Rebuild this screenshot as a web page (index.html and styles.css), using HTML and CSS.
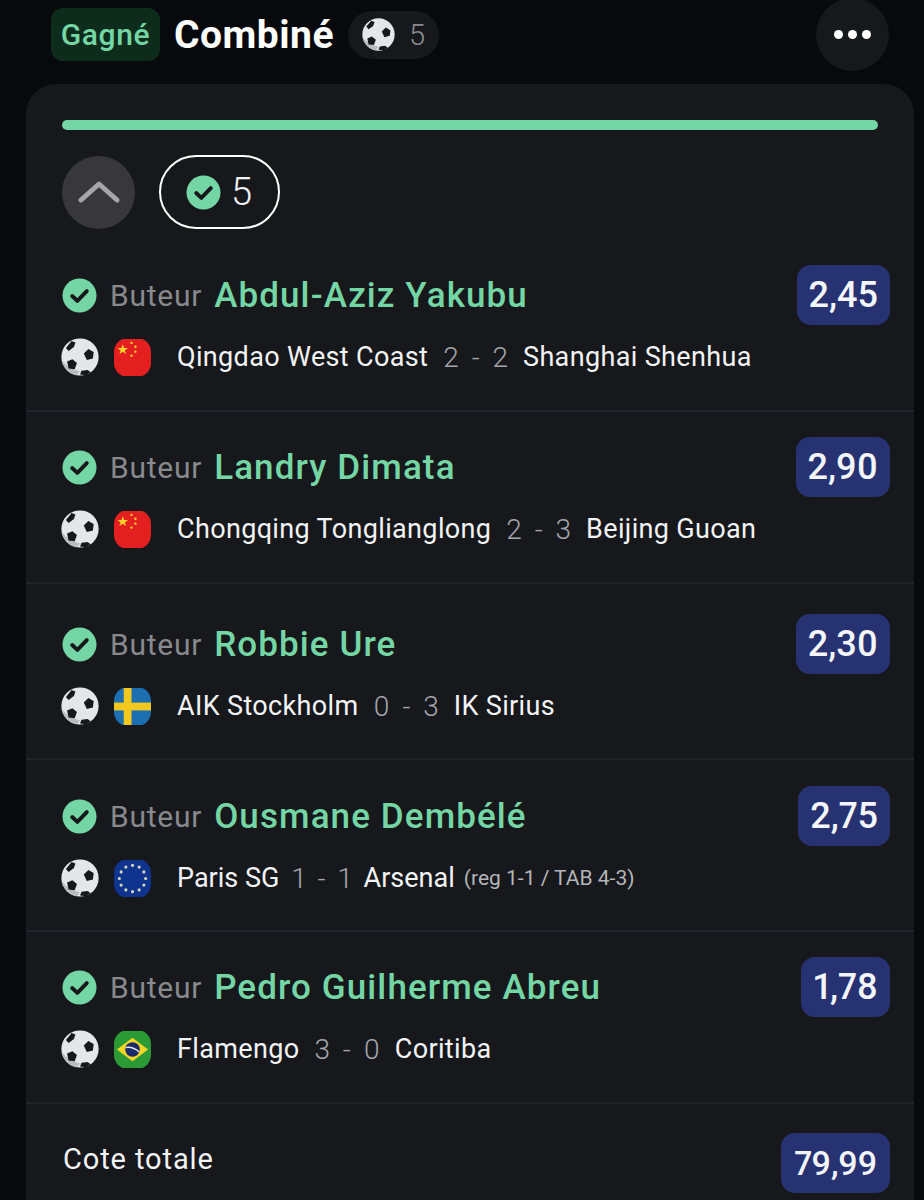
FILE: index.html
```html
<!DOCTYPE html>
<html lang="fr">
<head>
    <meta charset="UTF-8">
    <meta name="viewport" content="width=device-width, initial-scale=1.0">
    <title>Combiné</title>
    <link rel="stylesheet" href="styles.css">
</head>
<body>
    <svg class="defs" width="0" height="0">
        <symbol id="ball" viewBox="0 0 100 100">
            <circle cx="50" cy="50" r="49" fill="#e4e7e9"/>
            <path d="M2 58 A49 49 0 0 0 42 98 L50 88 L30 80 L12 70Z" fill="#b9bcbf"/>
            <polygon points="60,41 72,29 86,37 84,54 68,58" fill="#17181c"/>
            <polygon points="13,26 28,8 38,12 34,24 20,34" fill="#17181c"/>
            <polygon points="16,62 30,56 42,66 36,82 20,80" fill="#17181c"/>
            <polygon points="50,96 54,86 70,84 78,90 66,98" fill="#17181c"/>
        </symbol>
        <symbol id="check" viewBox="0 0 36 36">
            <circle cx="18" cy="18" r="17.5" fill="#74d6a4"/>
            <path d="M10.5 18.5 L15.8 23.5 L25.5 13.5" fill="none" stroke="#17181c" stroke-width="4" stroke-linecap="round" stroke-linejoin="round"/>
        </symbol>
        <symbol id="china" viewBox="0 0 38 38">
            <rect width="38" height="38" fill="#e3201f"/>
            <polygon points="9,5.5 10.4,9.2 14.4,9.2 11.2,11.7 12.4,15.5 9,13.2 5.6,15.5 6.8,11.7 3.6,9.2 7.6,9.2" fill="#fcd22c"/>
            <circle cx="18" cy="4" r="1.2" fill="#fcd22c"/>
            <circle cx="22" cy="8" r="1.2" fill="#fcd22c"/>
            <circle cx="22" cy="13" r="1.2" fill="#fcd22c"/>
            <circle cx="18" cy="17" r="1.2" fill="#fcd22c"/>
        </symbol>
    </svg>

    <header class="top">
        <span class="tag">Gagné</span>
        <h1 class="title">Combiné</h1>
        <span class="chip">
            <svg class="chip-ball"><use href="#ball"/></svg>
            <span>5</span>
        </span>
        <button class="more" type="button" aria-label="Plus">
            <i></i><i></i><i></i>
        </button>
    </header>

    <main class="card">
        <div class="progress"></div>

        <div class="controls">
            <button class="toggle" type="button" aria-label="Replier">
                <svg width="42" height="24" viewBox="0 0 42 24">
                    <path d="M3 20 L21 4 L39 20" fill="none" stroke="#a6a6a9" stroke-width="5" stroke-linecap="round" stroke-linejoin="round"/>
                </svg>
            </button>
            <span class="won-count">
                <svg class="check"><use href="#check"/></svg>
                <span>5</span>
            </span>
        </div>

        <section class="leg">
            <div class="leg-top">
                <svg class="check"><use href="#check"/></svg>
                <span class="market">Buteur</span>
                <span class="player">Abdul-Aziz Yakubu</span>
                <span class="odds">2,45</span>
            </div>
            <div class="leg-match">
                <svg class="ball"><use href="#ball"/></svg>
                <svg class="flag"><use href="#china"/></svg>
                <span class="team">Qingdao West Coast</span>
                <span class="score">2 - 2</span>
                <span class="team">Shanghai Shenhua</span>
            </div>
        </section>

        <section class="leg">
            <div class="leg-top">
                <svg class="check"><use href="#check"/></svg>
                <span class="market">Buteur</span>
                <span class="player">Landry Dimata</span>
                <span class="odds">2,90</span>
            </div>
            <div class="leg-match">
                <svg class="ball"><use href="#ball"/></svg>
                <svg class="flag"><use href="#china"/></svg>
                <span class="team">Chongqing Tonglianglong</span>
                <span class="score">2 - 3</span>
                <span class="team">Beijing Guoan</span>
            </div>
        </section>

        <section class="leg leg-tall">
            <div class="leg-top">
                <svg class="check"><use href="#check"/></svg>
                <span class="market">Buteur</span>
                <span class="player">Robbie Ure</span>
                <span class="odds">2,30</span>
            </div>
            <div class="leg-match">
                <svg class="ball"><use href="#ball"/></svg>
                <svg class="flag" viewBox="0 0 38 38">
                    <rect width="38" height="38" fill="#1c6fb0"/>
                    <rect x="10" width="8" height="38" fill="#f2c81e"/>
                    <rect y="15" width="38" height="8" fill="#f2c81e"/>
                </svg>
                <span class="team">AIK Stockholm</span>
                <span class="score">0 - 3</span>
                <span class="team">IK Sirius</span>
            </div>
        </section>

        <section class="leg leg-after-tall">
            <div class="leg-top">
                <svg class="check"><use href="#check"/></svg>
                <span class="market">Buteur</span>
                <span class="player">Ousmane Dembélé</span>
                <span class="odds">2,75</span>
            </div>
            <div class="leg-match">
                <svg class="ball"><use href="#ball"/></svg>
                <svg class="flag" viewBox="0 0 38 38">
                    <rect width="38" height="38" fill="#0f3490"/>
                    <g fill="#d8d8b8">
                        <circle cx="19" cy="5.5" r="1.6"/>
                        <circle cx="25.8" cy="7.3" r="1.6"/>
                        <circle cx="30.7" cy="12.2" r="1.6"/>
                        <circle cx="32.5" cy="19" r="1.6"/>
                        <circle cx="30.7" cy="25.8" r="1.6"/>
                        <circle cx="25.8" cy="30.7" r="1.6"/>
                        <circle cx="19" cy="32.5" r="1.6"/>
                        <circle cx="12.2" cy="30.7" r="1.6"/>
                        <circle cx="7.3" cy="25.8" r="1.6"/>
                        <circle cx="5.5" cy="19" r="1.6"/>
                        <circle cx="7.3" cy="12.2" r="1.6"/>
                        <circle cx="12.2" cy="7.3" r="1.6"/>
                    </g>
                </svg>
                <span class="team team-tight">Paris SG</span>
                <span class="score score-tight">1 - 1</span>
                <span class="team team-tight">Arsenal</span>
                <span class="note">(reg 1-1 / TAB 4-3)</span>
            </div>
        </section>

        <section class="leg">
            <div class="leg-top">
                <svg class="check"><use href="#check"/></svg>
                <span class="market">Buteur</span>
                <span class="player">Pedro Guilherme Abreu</span>
                <span class="odds">1,78</span>
            </div>
            <div class="leg-match">
                <svg class="ball"><use href="#ball"/></svg>
                <svg class="flag" viewBox="0 0 38 38">
                    <rect width="38" height="38" fill="#2b9a35"/>
                    <polygon points="19,7 35,19 19,31 3,19" fill="#f3d624"/>
                    <circle cx="19" cy="19" r="7.5" fill="#1b2a6b"/>
                    <path d="M11.8 17 Q19 15.5 26 21.5" fill="none" stroke="#e8e8e8" stroke-width="1.4"/>
                </svg>
                <span class="team">Flamengo</span>
                <span class="score">3 - 0</span>
                <span class="team">Coritiba</span>
            </div>
        </section>

        <footer class="total">
            <span class="total-label">Cote totale</span>
            <span class="odds odds-total">79,99</span>
        </footer>
    </main>
</body>
</html>
```

FILE: styles.css
```css
html, body {
    height: 1200px;
    overflow: hidden;
}
body {
    font-family: Roboto, "Liberation Sans", sans-serif;
    margin: 0;
    padding: 0;
    background: #08090d;
    color: #f2f3f4;
}
.defs {
    display: block;
    height: 0;
}
button {
    border: none;
    padding: 0;
    cursor: pointer;
}

/* top bar */
.top {
    display: flex;
    align-items: center;
    height: 69px;
    padding: 0 35px 0 51px;
}
.tag {
    display: flex;
    align-items: center;
    justify-content: center;
    width: 109px;
    height: 53px;
    border-radius: 12px;
    background: #0e2c1c;
    color: #74d6a4;
    font-size: 30px;
    font-weight: 500;
    letter-spacing: 0.6px;
}
.title {
    margin: 0 0 0 14px;
    font-size: 39px;
    font-weight: 700;
    color: #fff;
    letter-spacing: 0.5px;
}
.chip {
    display: flex;
    align-items: center;
    gap: 14px;
    height: 48px;
    margin-left: 14px;
    padding: 0 14px;
    border-radius: 24px;
    background: #17181c;
    color: #8a8b8e;
    font-size: 29px;
    font-weight: 300;
}
.chip-ball {
    width: 33px;
    height: 33px;
}
.more {
    display: flex;
    align-items: center;
    justify-content: center;
    gap: 5px;
    width: 73px;
    height: 73px;
    margin: 0 0 0 auto;
    border-radius: 50%;
    background: #17181c;
}
.more i {
    width: 9px;
    height: 9px;
    border-radius: 50%;
    background: #fff;
}

/* card */
.card {
    margin: 15px 10px 0 26px;
    border-radius: 30px 30px 0 0;
    background: #17181c;
}
.progress {
    height: 10px;
    margin: 0 36px;
    border-radius: 5px;
    background: #74d6a4;
    position: relative;
    top: 36px;
}
.controls {
    display: flex;
    align-items: center;
    gap: 24px;
    height: 74px;
    padding: 61px 36px 0;
}
.toggle {
    display: flex;
    align-items: center;
    justify-content: center;
    width: 73px;
    height: 73px;
    border-radius: 50%;
    background: #38383c;
}
.won-count {
    display: flex;
    align-items: center;
    gap: 10px;
    height: 70px;
    padding: 0 26px 0 25px;
    border: 2px solid #fff;
    border-radius: 37px;
    font-size: 38px;
    font-weight: 300;
}
.check {
    width: 35px;
    height: 35px;
    flex: none;
}

/* legs */
.leg {
    padding: 36px 24px 33px 36px;
    border-bottom: 2px solid #22232a;
}
.leg + .leg {
    padding-top: 25px;
}
.leg + .leg-tall {
    padding-top: 30px;
    padding-bottom: 32px;
}
.leg + .leg-after-tall {
    padding-top: 26px;
    padding-bottom: 32px;
}
.leg-top {
    display: flex;
    align-items: center;
    height: 60px;
}
.market {
    margin-left: 13px;
    color: #88898c;
    font-size: 30px;
    letter-spacing: 0.75px;
}
.player {
    margin-left: 12px;
    color: #74d6a4;
    font-size: 35px;
    font-weight: 500;
    letter-spacing: 1.1px;
}
.odds {
    display: flex;
    align-items: center;
    height: 60px;
    margin-left: auto;
    padding: 0 12px;
    border-radius: 14px;
    background: #273272;
    color: #f4f5f8;
    font-size: 36px;
    font-weight: 500;
    font-variant-numeric: proportional-nums;
}
.odds-total {
    padding: 0 13px;
    font-size: 34px;
    letter-spacing: -0.3px;
}
.leg-match {
    display: flex;
    align-items: center;
    height: 40px;
    margin-top: 12px;
    font-size: 27px;
}
.ball {
    width: 38px;
    height: 38px;
    margin-left: -1px;
    flex: none;
}
.flag {
    width: 37px;
    height: 39px;
    margin: 0 26px 0 15px;
    border-radius: 14px;
    flex: none;
}
.team {
    letter-spacing: 0.35px;
}
.team-tight {
    letter-spacing: 0;
}
.score {
    margin: 0 15px;
    color: #a5a6ab;
    font-size: 28px;
    font-weight: 300;
    word-spacing: 6px;
    font-variant-numeric: proportional-nums;
}
.score-tight {
    margin: 0 13px;
}
.note {
    margin-left: 9px;
    color: #b4b5b8;
    font-size: 21px;
}

/* total */
.total {
    display: flex;
    align-items: center;
    justify-content: space-between;
    padding: 29px 24px 20px 37px;
}
.total-label {
    margin-bottom: 8px;
    font-size: 29px;
    letter-spacing: 0.9px;
}
```
